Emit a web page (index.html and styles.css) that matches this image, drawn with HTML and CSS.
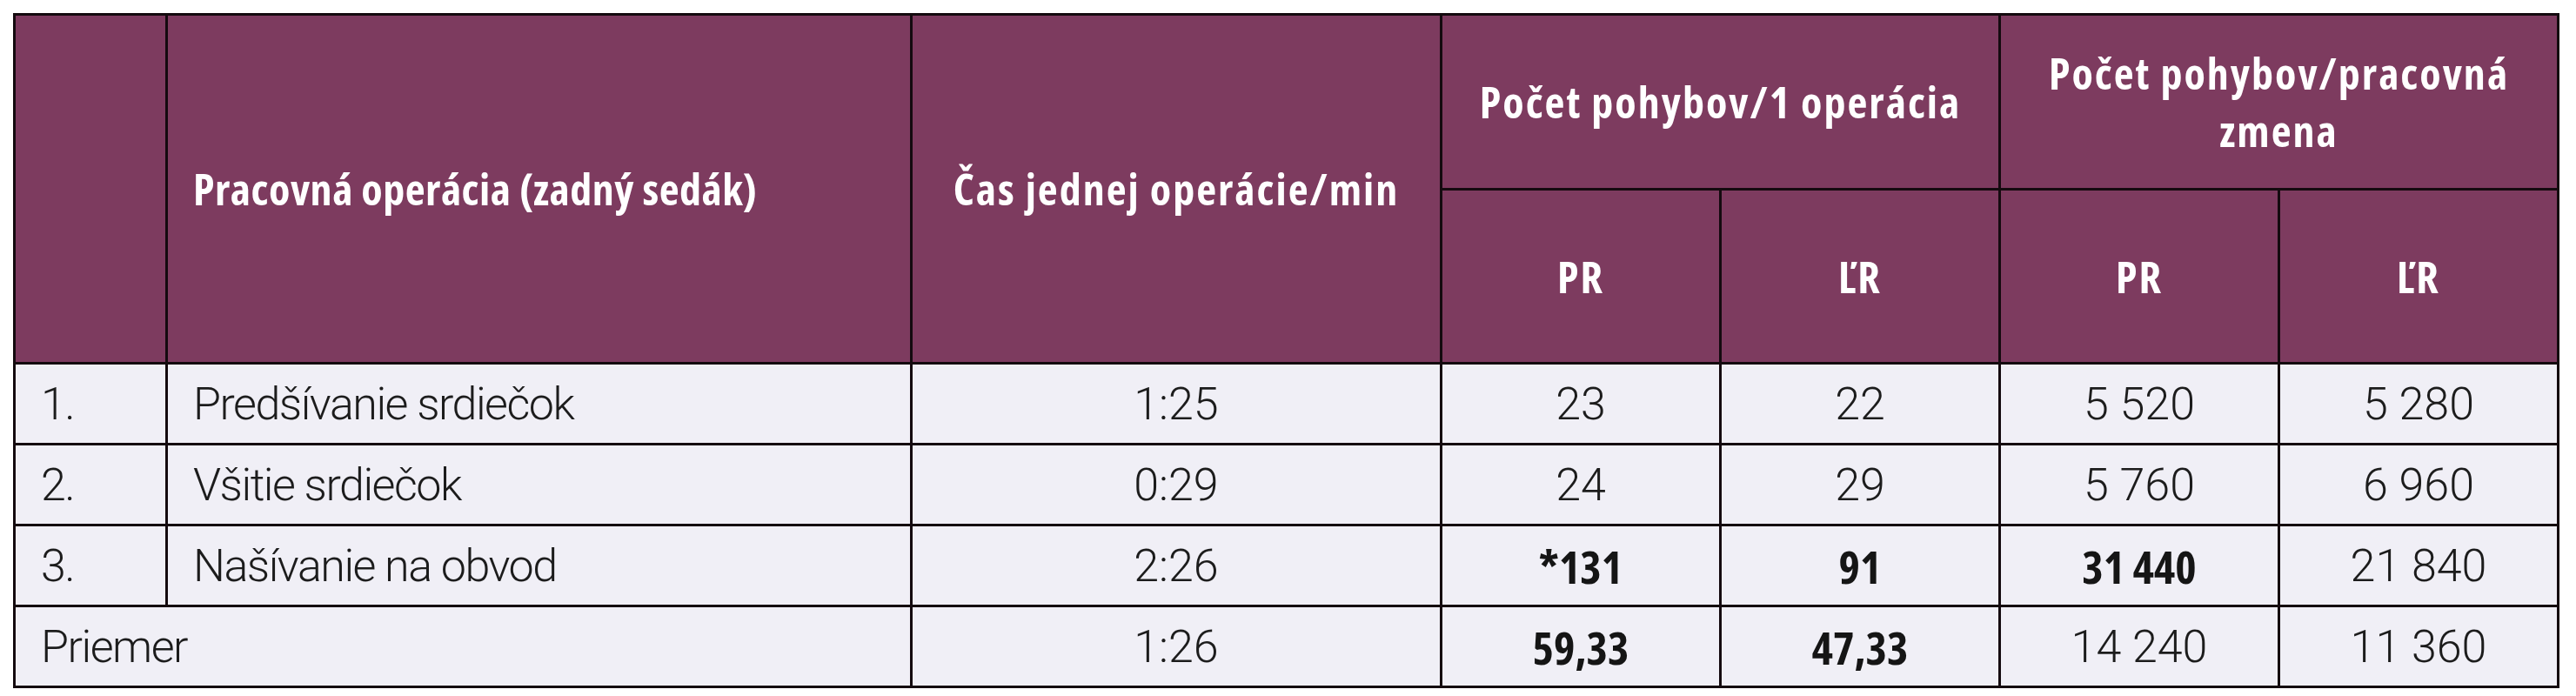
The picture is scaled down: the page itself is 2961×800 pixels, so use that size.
FILE: index.html
```html
<!DOCTYPE html>
<html lang="sk">
<head>
<meta charset="utf-8">
<title>Počet pohybov</title>
<link rel="stylesheet" href="styles.css">
</head>
<body>
<table class="grid">
  <colgroup>
    <col class="c-num">
    <col class="c-op">
    <col class="c-time">
    <col class="c-v">
    <col class="c-v">
    <col class="c-v">
    <col class="c-v">
  </colgroup>
  <thead>
    <tr class="h1">
      <th rowspan="2"></th>
      <th rowspan="2" class="left tight">Pracovná operácia (zadný sedák)</th>
      <th rowspan="2">Čas jednej operácie/min</th>
      <th colspan="2">Počet pohybov/1 operácia</th>
      <th colspan="2" class="wrap">Počet pohybov/pracovná zmena</th>
    </tr>
    <tr class="h2">
      <th>PR</th>
      <th>ĽR</th>
      <th>PR</th>
      <th>ĽR</th>
    </tr>
  </thead>
  <tbody>
    <tr>
      <td class="left">1.</td>
      <td class="left">Predšívanie srdiečok</td>
      <td>1:25</td>
      <td>23</td>
      <td>22</td>
      <td>5 520</td>
      <td>5 280</td>
    </tr>
    <tr>
      <td class="left">2.</td>
      <td class="left">Všitie srdiečok</td>
      <td>0:29</td>
      <td>24</td>
      <td>29</td>
      <td>5 760</td>
      <td>6 960</td>
    </tr>
    <tr>
      <td class="left">3.</td>
      <td class="left">Našívanie na obvod</td>
      <td>2:26</td>
      <td class="bold">*131</td>
      <td class="bold">91</td>
      <td class="bold">31 440</td>
      <td>21 840</td>
    </tr>
    <tr>
      <td colspan="2" class="left">Priemer</td>
      <td>1:26</td>
      <td class="bold">59,33</td>
      <td class="bold">47,33</td>
      <td>14 240</td>
      <td>11 360</td>
    </tr>
  </tbody>
</table>
</body>
</html>
```
FILE: styles.css
```css
html, body {
  margin: 0;
  padding: 0;
  background: #ffffff;
}

body {
  padding: 15px 0 0 15px;
  font-family: "Open Sans", "Liberation Sans", sans-serif;
}

.grid {
  border-collapse: collapse;
  table-layout: fixed;
  width: 2927px;
}

.c-num { width: 175px; }
.c-op { width: 856px; }
.c-time { width: 609px; }
.c-v { width: 321px; }

.grid th,
.grid td {
  border: 3px solid #140a0f;
  text-align: center;
  vertical-align: middle;
  padding: 0;
}

.grid th {
  background: #7d3b5f;
  color: #ffffff;
  font-family: "Open Sans", "Liberation Sans", sans-serif;
  font-weight: 700;
  font-stretch: 75%;
  font-size: 50px;
  letter-spacing: 2px;
  line-height: 66px;
}

.grid th.tight {
  letter-spacing: 0.5px;
}

.grid .h1 th { height: 198px; }
.grid .h2 th { height: 197px; }

.grid th.wrap {
  padding: 0 20px;
}

.grid td {
  background: #f0eff6;
  color: #1c1c1c;
  font-family: Roboto, "Open Sans", sans-serif;
  font-weight: 300;
  font-size: 52px;
  height: 90px;
}

.grid .left {
  text-align: left;
  padding-left: 29px;
}

.grid td.left {
  letter-spacing: -1.5px;
}

.grid td.bold {
  font-family: "Open Sans", "Liberation Sans", sans-serif;
  font-weight: 700;
  font-stretch: 75%;
  color: #151515;
}
```
